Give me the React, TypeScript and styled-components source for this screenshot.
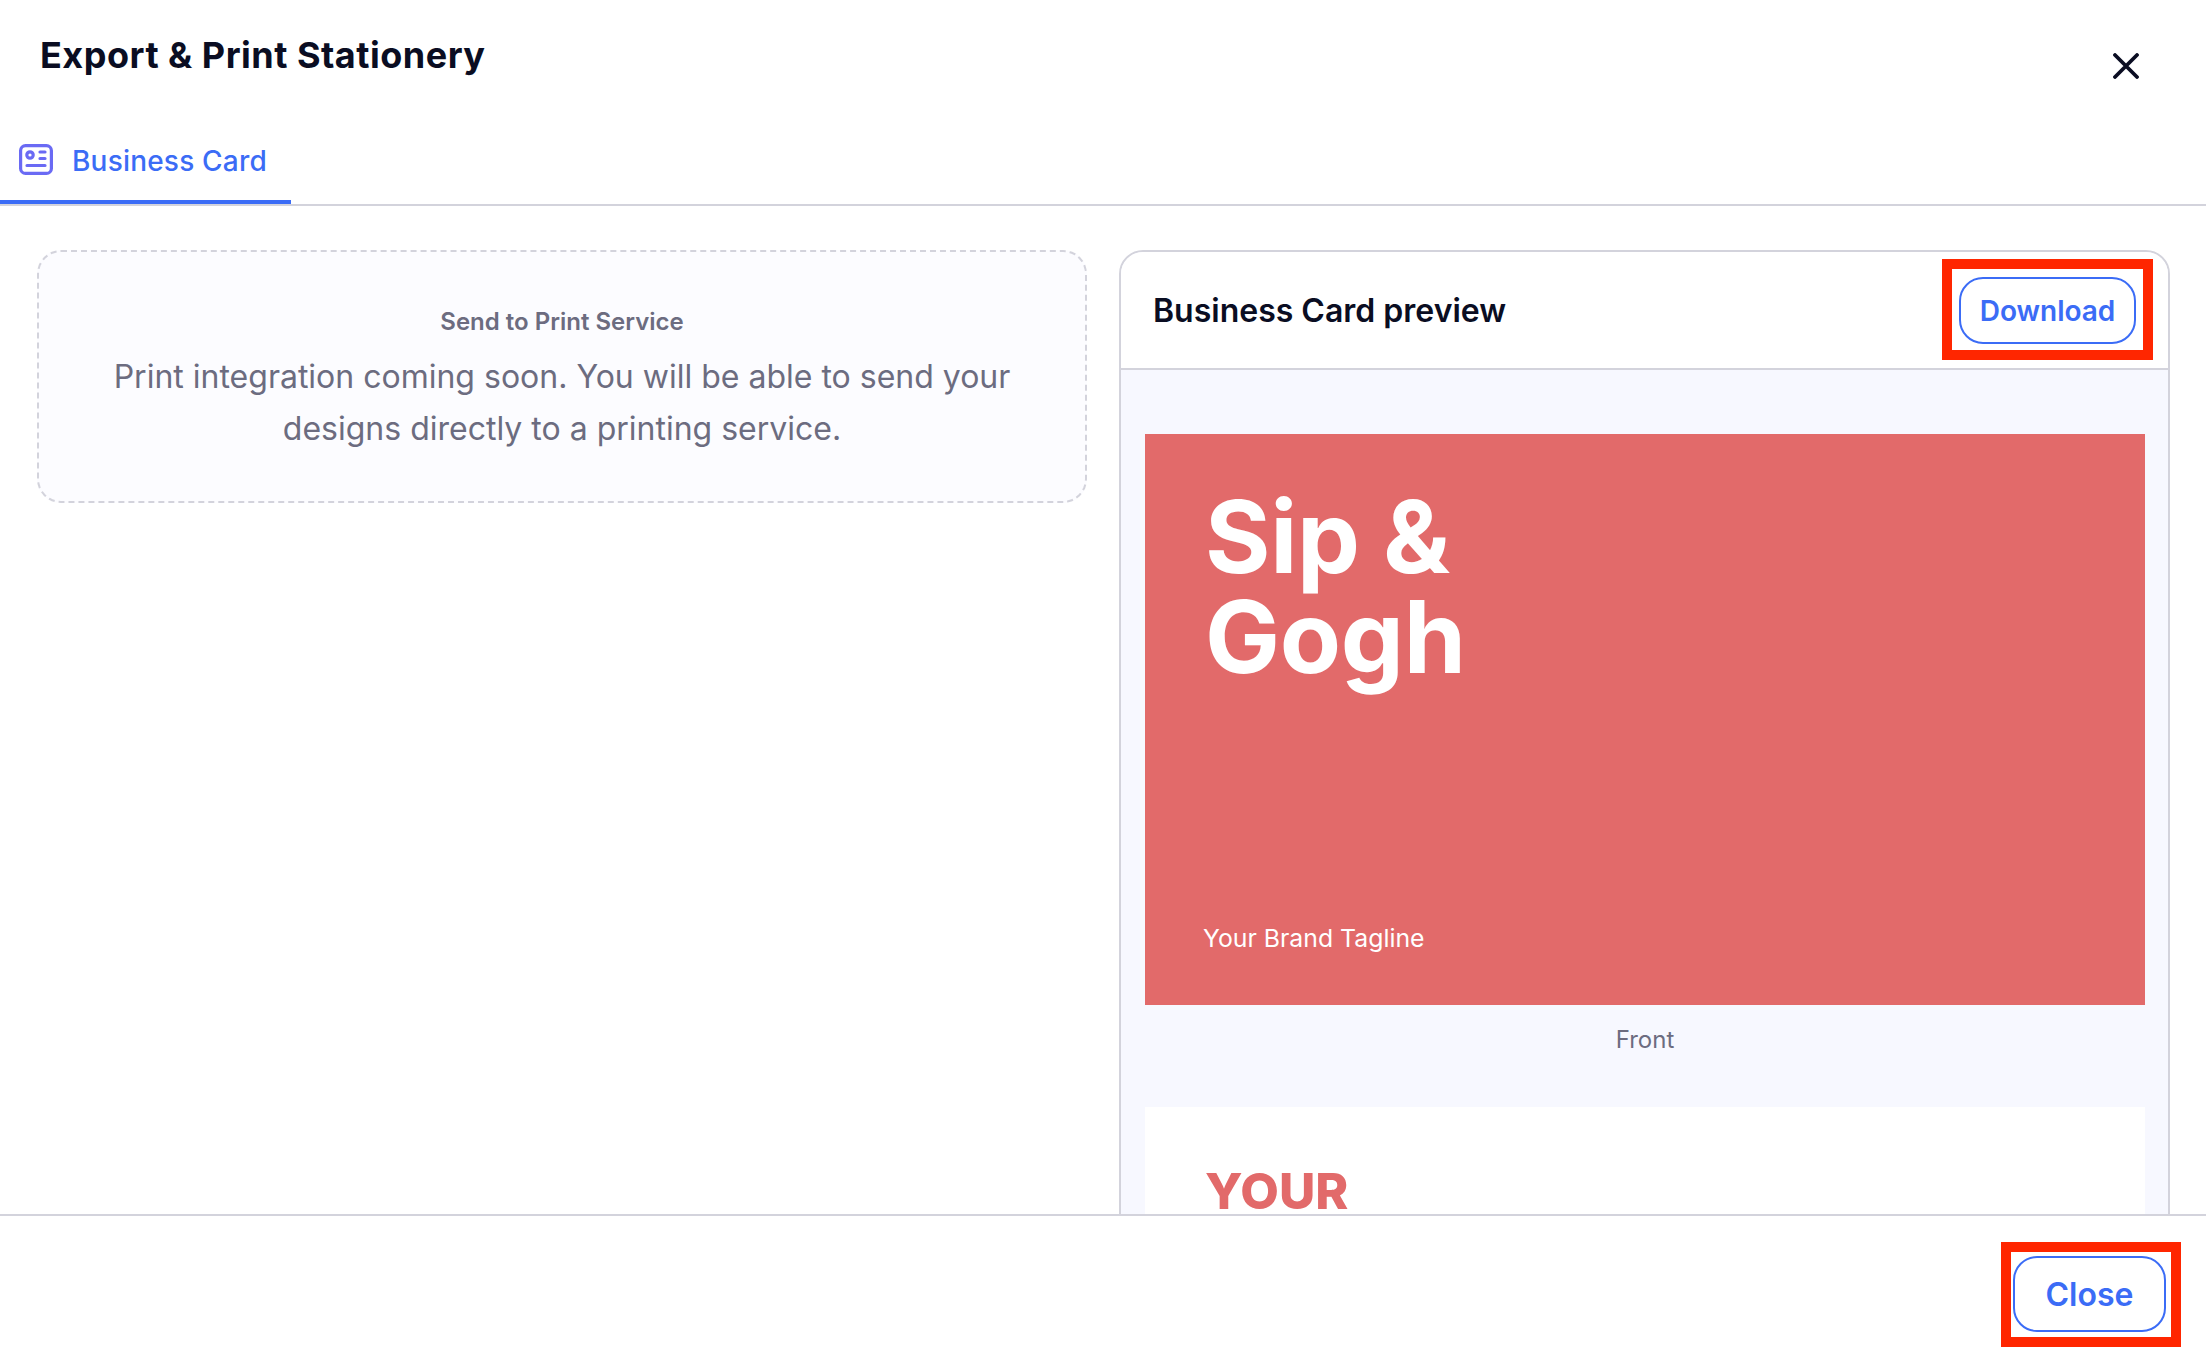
import { createGlobalStyle, styled } from 'styled-components';

const GlobalStyle = createGlobalStyle`
  html, body {
    margin: 0;
    height: 100%;
    background: #fff;
  }

  body {
    font-family: Inter, "Liberation Sans", sans-serif;
    color: #0a0d22;
    overflow: hidden;
  }

  * {
    box-sizing: border-box;
  }
`;

const Dialog = styled.div`
  width: 2206px;
  height: 1360px;
  display: flex;
  flex-direction: column;
  background: #fff;
`;

const Header = styled.header`
  height: 130px;
  flex: none;
  display: flex;
  justify-content: space-between;
  align-items: flex-start;
  padding: 33px 67px 0 40px;
`;

const Title = styled.h1`
  margin: 0;
  font-size: 36px;
  line-height: 44px;
  font-weight: 700;
  letter-spacing: 0.5px;
`;

const CloseIcon = styled.button`
  width: 26px;
  height: 26px;
  margin-top: 20px;
  padding: 0;
  border: 0;
  background: none;
  color: #0a0d22;
  display: flex;
`;

const Tabs = styled.nav`
  height: 76px;
  flex: none;
  display: flex;
  border-bottom: 2px solid #d3d3dc;
`;

const Tab = styled.div<{ $active?: boolean }>`
  width: 291px;
  height: 74px;
  display: flex;
  align-items: flex-start;
  gap: 19px;
  padding: 15px 0 0 19px;
  font-size: 28px;
  line-height: 32px;
  font-weight: 500;
  letter-spacing: 0.2px;
  color: #3b6cf6;
  border-bottom: 4px solid ${(p) => (p.$active ? '#3b6cf6' : 'transparent')};

  svg {
    margin-top: -1px;
  }
`;

const Main = styled.main`
  flex: 1;
  min-height: 0;
  overflow: hidden;
  display: grid;
  grid-template-columns: 1050px 1051px;
  gap: 32px;
  padding: 44px 36px 0 37px;
  align-items: start;
`;

const Notice = styled.section`
  height: 253px;
  padding: 54px 60px 0;
  border: 2px dashed #d3d3dc;
  border-radius: 24px;
  background: #fcfcff;
  text-align: center;
  color: #6c6c80;
`;

const NoticeTitle = styled.h2`
  margin: 0 0 13px;
  font-size: 24px;
  line-height: 32px;
  font-weight: 600;
`;

const NoticeText = styled.p`
  margin: 0;
  font-size: 32px;
  line-height: 52px;
  font-weight: 400;
`;

const Preview = styled.section`
  border: 2px solid #d3d3dc;
  border-radius: 24px 24px 0 0;
  background: #f7f8ff;
`;

const PreviewHeader = styled.div`
  height: 118px;
  display: flex;
  justify-content: space-between;
  align-items: center;
  padding: 0 32px 0 32px;
  background: #fff;
  border-radius: 22px 22px 0 0;
  border-bottom: 2px solid #d3d3dc;
`;

const PreviewTitle = styled.h3`
  margin: 2px 0 0;
  font-size: 32px;
  line-height: 40px;
  font-weight: 600;
`;

const OutlineButton = styled.button<{ $size: number }>`
  position: relative;
  padding: 1px 0 0;
  border: 2px solid #3b6cf6;
  border-radius: 24px;
  background: #fff;
  color: #3b6cf6;
  font-family: inherit;
  font-size: ${(p) => p.$size}px;
  font-weight: 600;
`;

const DownloadButton = styled(OutlineButton)`
  width: 177px;
  height: 67px;

  &::after {
    content: '';
    position: absolute;
    inset: -20px -19px -18px -19px;
    border: 10px solid #ff2600;
  }
`;

const CloseButton = styled(OutlineButton)`
  width: 153px;
  height: 76px;

  &::after {
    content: '';
    position: absolute;
    inset: -16px -17px -17px -14px;
    border: 10px solid #ff2600;
  }
`;

const PreviewBody = styled.div`
  padding: 64px 23px 0 24px;
`;

const CardFront = styled.div`
  height: 571px;
  padding: 53px 62px 0 60px;
  display: flex;
  flex-direction: column;
  background: #e26a6a;
  color: #fff;
`;

const BrandName = styled.div`
  font-size: 100px;
  line-height: 100px;
  font-weight: 700;
  letter-spacing: -0.3px;
  width: 400px;
`;

const Tagline = styled.div`
  margin-top: auto;
  margin-bottom: 50px;
  margin-left: -2px;
  font-size: 24.8px;
  line-height: 34px;
`;

const CardLabel = styled.div`
  margin: 19px 0 51px;
  text-align: center;
  font-size: 24px;
  line-height: 32px;
  color: #6c6c80;
`;

const CardBack = styled.div`
  height: 400px;
  padding: 61px 62px 0 60px;
  background: #fff;
`;

const BackHeading = styled.div`
  font-size: 50px;
  line-height: 46px;
  font-weight: 800;
  color: #e26a6a;
`;

const Footer = styled.footer`
  height: 146px;
  flex: none;
  display: flex;
  justify-content: flex-end;
  padding: 40px 40px 0 0;
  border-top: 2px solid #d3d3dc;
  background: #fff;

  & > button {
    align-self: flex-start;
  }
`;

export default function App() {
  return (
    <Dialog>
      <GlobalStyle />
      <Header>
        <Title>Export &amp; Print Stationery</Title>
        <CloseIcon aria-label="Close">
          <svg width="26" height="26" viewBox="0 0 26 26" fill="none" stroke="currentColor" strokeWidth="3.8" strokeLinecap="round">
            <path d="M2 2 L24 24 M24 2 L2 24" />
          </svg>
        </CloseIcon>
      </Header>
      <Tabs>
        <Tab $active>
          <svg width="34" height="31" viewBox="0 0 34 31" fill="none" stroke="#6a6af4" strokeWidth="3.2" strokeLinecap="round">
            <rect x="1.6" y="1.6" width="30.8" height="27.8" rx="5" />
            <circle cx="11" cy="11" r="3.2" />
            <path d="M21 8 H26 M21 14.5 H26 M8 21.5 H26" />
          </svg>
          Business Card
        </Tab>
      </Tabs>
      <Main>
        <Notice>
          <NoticeTitle>Send to Print Service</NoticeTitle>
          <NoticeText>
            Print integration coming soon. You will be able to send your designs directly to a printing service.
          </NoticeText>
        </Notice>
        <Preview>
          <PreviewHeader>
            <PreviewTitle>Business Card preview</PreviewTitle>
            <DownloadButton $size={28}>Download</DownloadButton>
          </PreviewHeader>
          <PreviewBody>
            <CardFront>
              <BrandName>Sip &amp; Gogh</BrandName>
              <Tagline>Your Brand Tagline</Tagline>
            </CardFront>
            <CardLabel>Front</CardLabel>
            <CardBack>
              <BackHeading>YOUR</BackHeading>
            </CardBack>
          </PreviewBody>
        </Preview>
      </Main>
      <Footer>
        <CloseButton $size={32}>Close</CloseButton>
      </Footer>
    </Dialog>
  );
}
